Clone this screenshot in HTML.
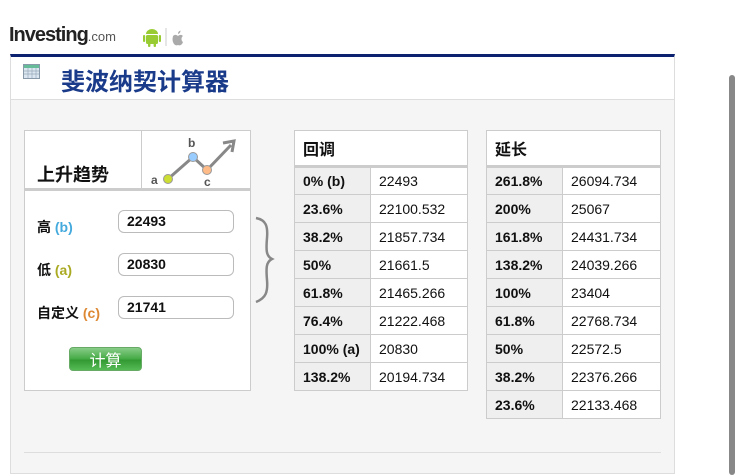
<!DOCTYPE html>
<html><head><meta charset="utf-8"><style>
*{margin:0;padding:0;box-sizing:border-box}
body{width:740px;height:464px;background:#fff;position:relative;overflow:hidden;font-family:"Liberation Sans","Noto Sans CJK SC",sans-serif;color:#111}
.abs{position:absolute}
.logo{left:9px;top:24px;font-size:20px;font-weight:bold;letter-spacing:-1px;color:#222}
.logo span{font-size:13px;font-weight:normal;color:#555;letter-spacing:0}
.cont{left:10px;top:54px;width:665px;height:420px;border:1px solid #ddd;border-top:3px solid #0c2270;background:#f5f5f5}
.title{left:11px;top:57px;width:663px;height:43px;background:#fff;border-bottom:1px solid #ddd}
.title h1{position:absolute;left:50px;top:5px;font-size:24px;color:#1a3a8a;font-weight:bold;font-family:"Noto Sans CJK SC",sans-serif}
.lbox{left:24px;top:130px;width:227px;height:261px;border:1px solid #ccc;background:#fff}
table{border-collapse:collapse;position:absolute;background:#fff;font-size:14px}
td{border:1px solid #ccc;height:28px;padding:0 8px}
td.k{background:#efefef;font-weight:bold;width:76px}
th{border:1px solid #ccc;border-bottom:3px solid #ccc;height:36px;text-align:left;padding:0 8px;font-size:16px;font-family:"Noto Sans CJK SC",sans-serif}
.inp{left:118px;width:116px;height:23px;border:1px solid #bbb;border-radius:6px;background:#fff;font-size:14px;font-weight:bold;padding:2px 0 0 8px}
.lab{left:37px;font-size:14px;font-weight:bold;font-family:"Liberation Sans","Noto Sans CJK SC",sans-serif}
</style></head><body>
<div class="abs logo">Investing<span>.com</span></div>
<svg class="abs" style="left:142px;top:26px" width="52" height="22"><path d="M4 8a6 5 0 0 1 12 0z" fill="#9c3"/><rect x="4" y="9" width="12" height="9" rx="1.5" fill="#9c3"/><rect x="1" y="9" width="2.2" height="7" rx="1" fill="#9c3"/><rect x="16.8" y="9" width="2.2" height="7" rx="1" fill="#9c3"/><rect x="6" y="17" width="2.4" height="4" rx="1" fill="#9c3"/><rect x="11.6" y="17" width="2.4" height="4" rx="1" fill="#9c3"/><line x1="24" y1="2" x2="24" y2="20" stroke="#ccc"/><path d="M31 10c2-2 4-1 5 0 1-1 3-2 5 0-2 1-2 5 0 6-1 3-3 4-5 3-2 1-4 0-5-3-1-3 0-5 0-6z M36 8c0-2 1-3 2.5-3.5 0 2-1 3-2.5 3.5z" fill="#aaa"/></svg>
<div class="abs cont"></div>
<div class="abs title"><svg class="abs" style="left:12px;top:7px" width="18" height="16"><rect x="0.5" y="0.5" width="16" height="14" fill="#dbe6f0" stroke="#89a"/><rect x="1" y="1" width="15" height="3" fill="#6b9"/><path d="M1 7h15M1 10h15M5 4v10M9 4v10M13 4v10" stroke="#9ab" stroke-width=".7"/></svg><h1>斐波纳契计算器</h1></div>
<div class="abs lbox">
<div class="abs" style="left:0;top:0;width:117px;height:60px;border-right:1px solid #ccc;border-bottom:3px solid #ccc"></div>
<div class="abs" style="left:117px;top:0;width:108px;height:60px;border-bottom:3px solid #ccc"></div>
<div class="abs" style="left:12px;top:30px;font-size:18px;font-weight:bold;font-family:'Noto Sans CJK SC',sans-serif">上升趋势</div>
<svg class="abs" style="left:118px;top:0" width="108" height="58"><path d="M25 48L50 26L64 39L88 14" stroke="#888" stroke-width="3" fill="none"/><path d="M80 12L91 10L89 21" stroke="#888" stroke-width="3" fill="none"/><circle cx="25" cy="48" r="4.5" fill="#cd3" stroke="#999"/><circle cx="50" cy="26" r="4.5" fill="#9cf" stroke="#999"/><circle cx="64" cy="39" r="4.5" fill="#fb8" stroke="#999"/><text x="8" y="53" font-size="12" font-weight="bold" fill="#555" font-family="Liberation Sans">a</text><text x="45" y="16" font-size="12" font-weight="bold" fill="#555" font-family="Liberation Sans">b</text><text x="61" y="55" font-size="12" font-weight="bold" fill="#555" font-family="Liberation Sans">c</text></svg>
</div>
<div class="abs lab" style="top:217px">高 <span style="color:#4ad">(b)</span></div>
<div class="abs lab" style="top:260px">低 <span style="color:#aa2">(a)</span></div>
<div class="abs lab" style="top:303px">自定义 <span style="color:#d83">(c)</span></div>
<div class="abs inp" style="top:210px">22493</div>
<div class="abs inp" style="top:253px">20830</div>
<div class="abs inp" style="top:296px">21741</div>
<div class="abs" style="left:69px;top:347px;width:73px;height:24px;border-radius:4px;background:linear-gradient(#8c8,#4a4 50%,#393 55%,#5b5);border:1px solid #6a6;color:#fff;font-size:16px;text-align:center;line-height:22px;font-family:'Noto Sans CJK SC',sans-serif">计算</div>
<svg class="abs" style="left:252px;top:216px" width="24" height="90"><path d="M4 2C14 4 16 10 15 22C14 34 14 40 20 43C14 46 14 52 15 64C16 76 14 82 4 86" stroke="#888" stroke-width="2.5" fill="none"/></svg>
<table style="left:294px;top:130px;width:174px">
<tr><th colspan="2">回调</th></tr>
<tr><td class="k">0% (b)</td><td>22493</td></tr>
<tr><td class="k">23.6%</td><td>22100.532</td></tr>
<tr><td class="k">38.2%</td><td>21857.734</td></tr>
<tr><td class="k">50%</td><td>21661.5</td></tr>
<tr><td class="k">61.8%</td><td>21465.266</td></tr>
<tr><td class="k">76.4%</td><td>21222.468</td></tr>
<tr><td class="k">100% (a)</td><td>20830</td></tr>
<tr><td class="k">138.2%</td><td>20194.734</td></tr>
</table>
<table style="left:486px;top:130px;width:175px">
<tr><th colspan="2">延长</th></tr>
<tr><td class="k">261.8%</td><td>26094.734</td></tr>
<tr><td class="k">200%</td><td>25067</td></tr>
<tr><td class="k">161.8%</td><td>24431.734</td></tr>
<tr><td class="k">138.2%</td><td>24039.266</td></tr>
<tr><td class="k">100%</td><td>23404</td></tr>
<tr><td class="k">61.8%</td><td>22768.734</td></tr>
<tr><td class="k">50%</td><td>22572.5</td></tr>
<tr><td class="k">38.2%</td><td>22376.266</td></tr>
<tr><td class="k">23.6%</td><td>22133.468</td></tr>
</table>
<div class="abs" style="left:24px;top:452px;width:637px;height:1px;background:#ddd"></div>
<div class="abs" style="left:729px;top:75px;width:6px;height:400px;background:#888;border-radius:3px"></div>
</body></html>
